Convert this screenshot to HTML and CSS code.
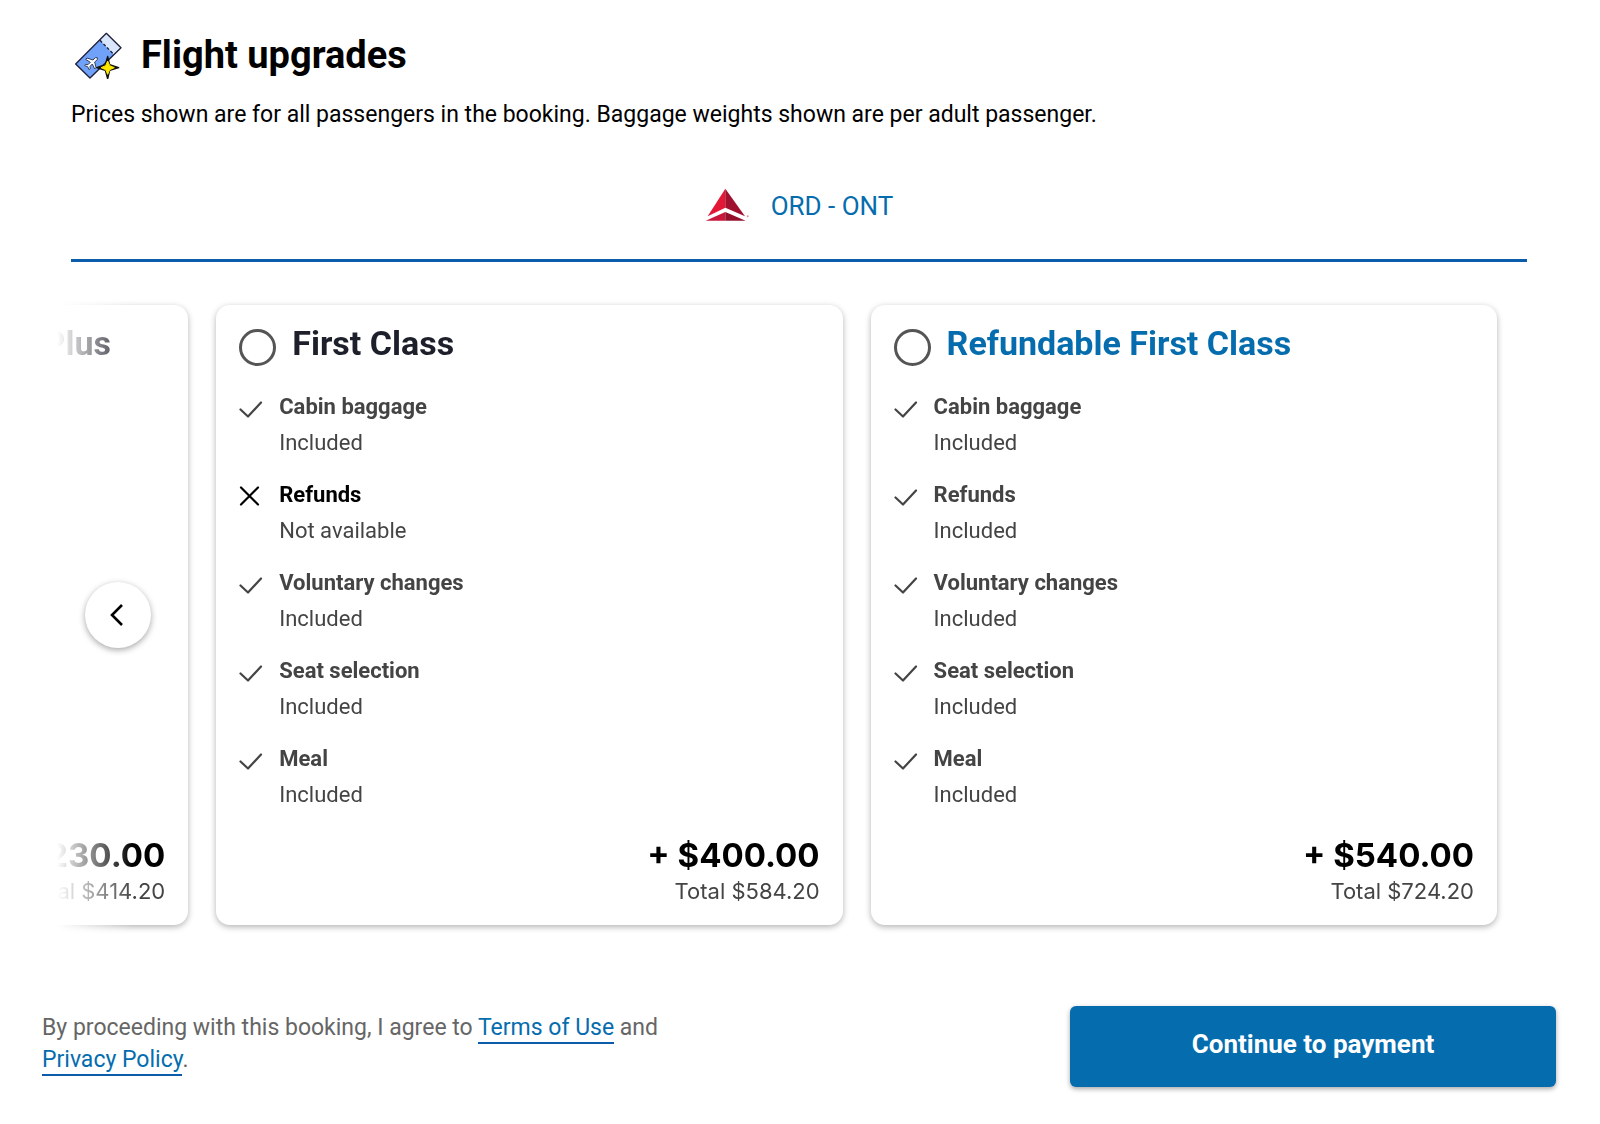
FILE: index.html
```html
<!DOCTYPE html>
<html lang="en">
<head>
  <meta charset="utf-8">
  <title>Flight upgrades</title>
  <link rel="stylesheet" href="styles.css">
</head>
<body>
<!-- Shared icons -->
<svg class="sprite" aria-hidden="true">
  <symbol id="check" viewBox="0 0 24 24">
    <path d="M1.5 12.5 L9 19.5 L22 5.5" fill="none" stroke="currentColor" stroke-width="2.2" stroke-linecap="round" stroke-linejoin="round"/>
  </symbol>
  <symbol id="cross" viewBox="0 0 24 24">
    <path d="M2 2.5 L19 19.5 M19 2.5 L2 19.5" fill="none" stroke="currentColor" stroke-width="2.2" stroke-linecap="round"/>
  </symbol>
</svg>

<header class="page-header">
  <div class="heading">
    <svg class="heading-icon" viewBox="72 48 144 144" aria-hidden="true">
      <path d="M150 76 L169 55 L213 98 L192 119 Z" fill="#d9e6fc"/>
      <path d="M150 76 L192 119 L120 189 L77 147 Z" fill="#6fa2f8"/>
      <path d="M169 55 L213 98 L120 189 L77 147 Z" fill="none" stroke="#1d1f3a" stroke-width="4" stroke-linejoin="round"/>
      <path d="M150 76 L192 119" stroke="#1d1f3a" stroke-width="4" stroke-dasharray="9 6"/>
      <path d="M142 128 L136 128 L129 135 L111 129 L107 133 L121 142 L114 149 L107 148 L104 152 L113 155 L117 164 L121 161 L120 154 L127 147 L134 162 L138 158 L134 141 L142 134 Z" fill="#fff" stroke="#34405c" stroke-width="3" stroke-linejoin="round"/>
      <path d="M173 124 L179 149 L206 158 L179 166 L173 192 L166 166 L140 158 L166 149 Z" fill="#111" stroke="#111" stroke-width="4" stroke-linejoin="round"/>
      <path d="M173 138 L179 152 L193 158 L179 164 L173 178 L167 164 L153 158 L167 152 Z" fill="#ffe900" stroke="#ffe900" stroke-width="3"/>
    </svg>
    <h1>Flight upgrades</h1>
  </div>
  <p class="intro">Prices shown are for all passengers in the booking. Baggage weights shown are per adult passenger.</p>
</header>

<main>
  <!-- Route tab -->
  <button type="button" class="route-tab">
    <svg class="airline-logo" viewBox="42 58 132 96" aria-hidden="true">
      <path d="M103 54 L103 111 L50 137 Z" fill="#e31837"/>
      <path d="M103 54 L103 111 L162 137 Z" fill="#a0102f"/>
      <path d="M103 124 L103 150 L44 150 Z" fill="#c8173a"/>
      <path d="M103 124 L103 150 L164 150 Z" fill="#93102c"/>
      <circle cx="170" cy="137" r="3" fill="#e58a9a"/>
    </svg>
    <span>ORD - ONT</span>
  </button>

  <!-- Fare cards -->
  <form class="carousel" id="upgradeForm">
    <div class="track">
      <section class="card">
        <div class="card-header">
          <input type="radio" name="fare" id="comfortPlus">
          <label for="comfortPlus">Refundable Delta Comfort Plus</label>
        </div>
        <div class="price">
          <strong>+ $230.00</strong>
          <span>Total $414.20</span>
        </div>
      </section>

      <section class="card">
        <div class="card-header">
          <input type="radio" name="fare" id="firstClass">
          <label for="firstClass">First Class</label>
        </div>
        <ul class="features">
          <li><svg><use href="#check"/></svg><div><b>Cabin baggage</b><p>Included</p></div></li>
          <li class="unavailable"><svg><use href="#cross"/></svg><div><b>Refunds</b><p>Not available</p></div></li>
          <li><svg><use href="#check"/></svg><div><b>Voluntary changes</b><p>Included</p></div></li>
          <li><svg><use href="#check"/></svg><div><b>Seat selection</b><p>Included</p></div></li>
          <li><svg><use href="#check"/></svg><div><b>Meal</b><p>Included</p></div></li>
        </ul>
        <div class="price">
          <strong>+ $400.00</strong>
          <span>Total $584.20</span>
        </div>
      </section>

      <section class="card highlighted">
        <div class="card-header">
          <input type="radio" name="fare" id="refundableFirst">
          <label for="refundableFirst">Refundable First Class</label>
        </div>
        <ul class="features">
          <li><svg><use href="#check"/></svg><div><b>Cabin baggage</b><p>Included</p></div></li>
          <li><svg><use href="#check"/></svg><div><b>Refunds</b><p>Included</p></div></li>
          <li><svg><use href="#check"/></svg><div><b>Voluntary changes</b><p>Included</p></div></li>
          <li><svg><use href="#check"/></svg><div><b>Seat selection</b><p>Included</p></div></li>
          <li><svg><use href="#check"/></svg><div><b>Meal</b><p>Included</p></div></li>
        </ul>
        <div class="price">
          <strong>+ $540.00</strong>
          <span>Total $724.20</span>
        </div>
      </section>
    </div>
    <button type="button" class="previous" aria-label="Previous fares">
      <svg viewBox="0 0 24 24" aria-hidden="true">
        <path d="M16 2 L6 12 L16 22" fill="none" stroke="currentColor" stroke-width="2.6"/>
      </svg>
    </button>
  </form>
</main>

<footer>
  <p class="terms">By proceeding with this booking, I agree to <a href="#terms">Terms of Use</a> and <a href="#privacy">Privacy Policy</a>.</p>
  <button type="submit" form="upgradeForm" class="continue">Continue to payment</button>
</footer>
</body>
</html>
```
FILE: styles.css
```css
* {
  box-sizing: border-box;
}

body {
  margin: 0;
  padding: 31px 0;
  background-color: #fff;
  color: #000;
  font-family: Roboto, "Liberation Sans", sans-serif;
  font-size: 22px;
  line-height: 32px;
}

h1, p, ul {
  margin: 0;
  padding: 0;
}

button {
  font-family: inherit;
  cursor: pointer;
}

.sprite {
  display: none;
}

/* Page heading */
.page-header {
  padding: 0 71px;
}

.heading {
  display: flex;
  align-items: center;
  gap: 19px;
  padding-left: 3px;
}

.heading-icon {
  width: 48px;
  height: 48px;
}

h1 {
  font-size: 38px;
  line-height: 48px;
}

.intro {
  margin-top: 20px;
  font-size: 23px;
}

/* Route tab above the cards */
main {
  padding: 0 57px;
}

.route-tab {
  display: flex;
  align-items: center;
  justify-content: center;
  gap: 22px;
  width: calc(100% - 30px);
  margin: 55px 14px 0;
  padding: 0 0 33px;
  border: none;
  border-bottom: 3px solid #0b5cab;
  background: none;
  color: #056dae;
  font-size: 26px;
  line-height: 40px;
}

.airline-logo {
  width: 44px;
  height: 32px;
  overflow: visible;
}

/* Cards, fading out at the left edge */
.carousel {
  position: relative;
  margin-top: 31px;
}

.track {
  display: flex;
  justify-content: flex-end;
  gap: 28px;
  padding: 12px 46px 12px 0;
  overflow: hidden;
  -webkit-mask-image: linear-gradient(to right, transparent, #000 76px);
  mask-image: linear-gradient(to right, transparent, #000 76px);
}

.card {
  display: flex;
  flex: 0 0 43.5%;
  flex-direction: column;
  padding: 24px 23px 18px;
  border-radius: 14px;
  box-shadow: 0 2px 6px rgba(0, 0, 0, 0.3);
  background-color: #fff;
}

.card-header {
  display: flex;
  align-items: flex-start;
  gap: 16px;
  margin-bottom: 24px;
  color: #1d1f2a;
  font-size: 34px;
  font-weight: bold;
  line-height: 28px;
  white-space: nowrap;
}

.highlighted .card-header {
  color: #056dae;
}

.card-header input {
  flex: none;
  width: 37px;
  height: 37px;
  margin: 0 0 -1px;
  border: 3px solid #555;
  border-radius: 50%;
  appearance: none;
}

.card-header input:checked {
  background-color: #056dae;
}

.features {
  display: flex;
  flex-direction: column;
  gap: 16px;
  color: #444;
  line-height: 36px;
  list-style: none;
}

.features li {
  display: flex;
  gap: 16px;
}

.features svg {
  width: 24px;
  height: 24px;
  margin-top: 8px;
}

.unavailable b,
.unavailable svg {
  color: #000;
}

.price {
  display: flex;
  flex-direction: column;
  align-items: flex-end;
  margin-top: auto;
  padding-top: 23px;
  color: #444;
  font-family: Inter, sans-serif;
}

.price strong {
  color: #000;
  font-size: 33px;
  line-height: 39px;
}

/* Round arrow over the faded card */
.previous {
  position: absolute;
  top: 50%;
  left: 28px;
  display: flex;
  align-items: center;
  justify-content: center;
  width: 66px;
  height: 66px;
  margin-top: -33px;
  padding: 0;
  border: none;
  border-radius: 50%;
  box-shadow: 0 2px 6px rgba(0, 0, 0, 0.35);
  background-color: #fff;
  color: #000;
}

.previous svg {
  width: 24px;
  height: 24px;
}

/* Terms and continue button */
footer {
  display: flex;
  align-items: flex-start;
  justify-content: space-between;
  padding: 69px 44px 0 42px;
}

.terms {
  max-width: 640px;
  padding-top: 6px;
  color: #666;
  font-size: 23px;
}

.terms a {
  padding-bottom: 1px;
  border-bottom: 2px solid #0b5cab;
  color: #056dae;
  text-decoration: none;
}

.continue {
  width: 32%;
  min-width: 486px;
  padding: 22px 24px 27px;
  border: none;
  border-radius: 6px;
  box-shadow: 0 2px 5px rgba(0, 0, 0, 0.35);
  background-color: #056dae;
  color: #fff;
  font-size: 26px;
  font-weight: bold;
  line-height: 32px;
}
```
